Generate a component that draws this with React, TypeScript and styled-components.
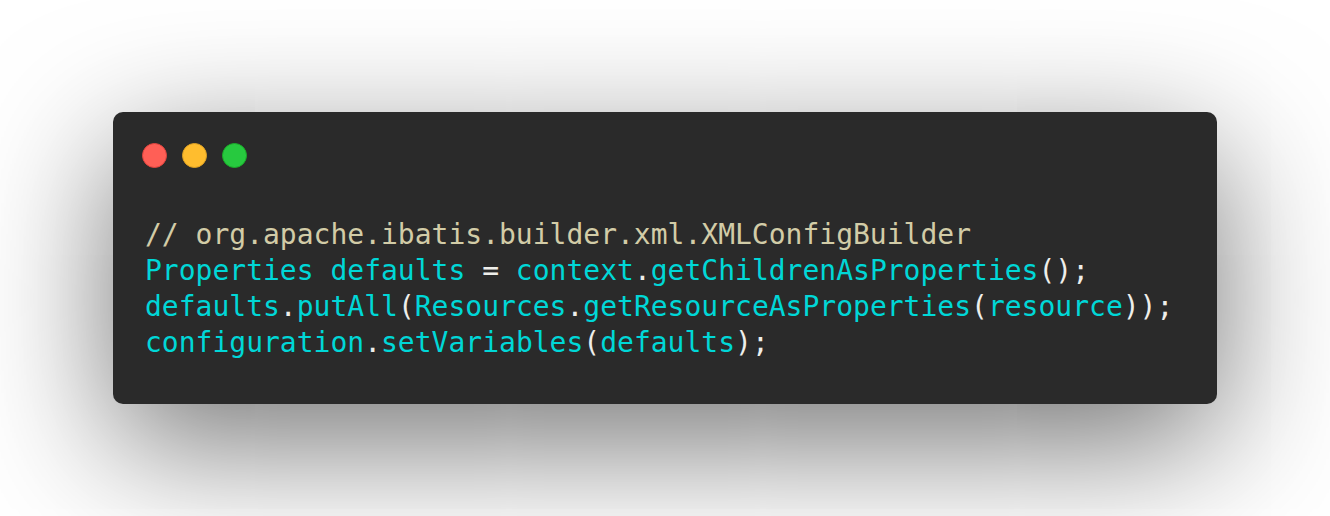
import React from "react";
import styled, { createGlobalStyle } from "styled-components";

const Global = createGlobalStyle`
  html, body { margin: 0; padding: 0; background: #ffffff; }
  #root { width: 1330px; height: 516px; }
`;

const Stage = styled.div`
  box-sizing: border-box;
  width: 1330px;
  height: 516px;
  padding: 112px 113px;
  background: #ffffff;
  display: flex;
  overflow: hidden;
`;

const Window = styled.div`
  flex: 1;
  background: #2a2a2a;
  border-radius: 10px;
  box-shadow: 0 40px 136px rgba(0, 0, 0, 0.55);
  padding: 31px 32px 43px 29px;
  display: flex;
  flex-direction: column;
`;

const Controls = styled.div`
  display: flex;
  gap: 15px;
  height: 25px;
  margin-bottom: 49px;
`;

const Dot = styled.span<{ $fill: string; $ring: string }>`
  box-sizing: border-box;
  width: 25px;
  height: 25px;
  border-radius: 50%;
  background: ${(p) => p.$fill};
  border: 1px solid ${(p) => p.$ring};
`;

const Code = styled.pre`
  margin: 0;
  padding-left: 3px;
  font-family: "DejaVu Sans Mono", monospace;
  font-size: 28px;
  line-height: 36px;
  color: #00d7d7;
  white-space: pre;
`;

const Tok = styled.span<{ $k: "c" | "p" }>`
  color: ${(p) => (p.$k === "c" ? "#d2cca7" : "#eeeeea")};
`;

export default function App() {
  return (
    <>
      <Global />
      <Stage>
        <Window>
          <Controls>
            <Dot $fill="#ff5f56" $ring="#e0443e" />
            <Dot $fill="#ffbd2e" $ring="#dea123" />
            <Dot $fill="#27c93f" $ring="#1aab29" />
          </Controls>
          <Code>
            <Tok $k="c">// org.apache.ibatis.builder.xml.XMLConfigBuilder</Tok>
            {"\n"}Properties defaults <Tok $k="p">=</Tok> context<Tok $k="p">.</Tok>getChildrenAsProperties<Tok $k="p">();</Tok>
            {"\n"}defaults<Tok $k="p">.</Tok>putAll<Tok $k="p">(</Tok>Resources<Tok $k="p">.</Tok>getResourceAsProperties<Tok $k="p">(</Tok>resource<Tok $k="p">));</Tok>
            {"\n"}configuration<Tok $k="p">.</Tok>setVariables<Tok $k="p">(</Tok>defaults<Tok $k="p">);</Tok>
          </Code>
        </Window>
      </Stage>
    </>
  );
}
